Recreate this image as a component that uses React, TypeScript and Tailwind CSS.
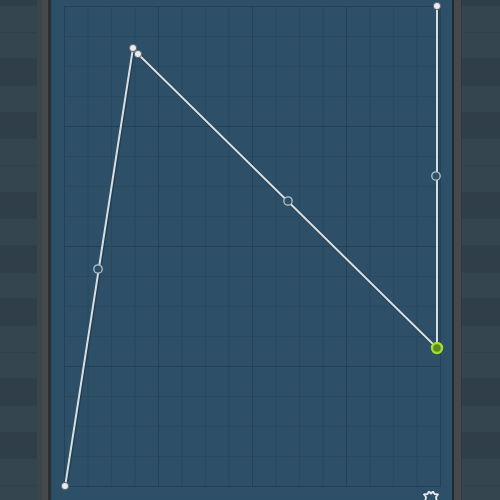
import React from "react";

// piano-style key rows, F at top of the first full row
const KEY_PATTERN = [false, false, true, false, true, false, false, true, false, true, false, true];

function KeyColumn({ className }: { className?: string }) {
  const rows = Array.from({ length: 19 }, (_, i) => KEY_PATTERN[i % 12]);
  return (
    <div className={"flex flex-col overflow-hidden " + (className ?? "")}>
      <div className="h-[5px] shrink-0 bg-[#2f3e48]" />
      {rows.map((dark, i) => (
        <div
          key={i}
          className={
            "h-[26.67px] shrink-0 border-t border-[#30404a] " +
            (dark ? "bg-[#2f3e48]" : "bg-[#35454f]")
          }
        />
      ))}
    </div>
  );
}

function Grid() {
  const w = 376;
  const h = 481;
  const vx = Array.from({ length: 17 }, (_, i) => i * 23.5);
  const hy = Array.from({ length: 17 }, (_, i) => i * 30);
  return (
    <svg width={w} height={h} viewBox={`0 0 ${w} ${h}`} className="overflow-visible block">
      {vx.map((x, i) => (
        <line
          key={"v" + i}
          x1={x + 0.5}
          y1={0}
          x2={x + 0.5}
          y2={h}
          stroke={i % 4 === 0 ? "#24425560" : "#29495e"}
          strokeWidth={1}
        />
      ))}
      {hy.map((y, i) => (
        <line
          key={"h" + i}
          x1={0}
          y1={y + 0.5}
          x2={w}
          y2={y + 0.5}
          stroke={i % 4 === 0 ? "#244255" : "#29495e"}
          strokeWidth={1}
        />
      ))}
      {vx.filter((_, i) => i % 4 === 0).map((x, i) => (
        <line key={"m" + i} x1={x + 0.5} y1={0} x2={x + 0.5} y2={h} stroke="#244255" strokeWidth={1} />
      ))}

      {/* envelope */}
      <g fill="none" strokeLinecap="round" strokeLinejoin="round">
        <polyline
          points="1,481 69,42 74,48 373,342 373,0"
          stroke="#1c2f3b"
          strokeOpacity={0.55}
          strokeWidth={3.5}
          transform="translate(0.6,0.8)"
        />
        <polyline points="1,481 69,42 74,48 373,342 373,0" stroke="#d9dee2" strokeWidth={2} />
      </g>

      {/* tension handles */}
      {[
        [34, 263],
        [224, 195],
        [372, 170],
      ].map(([x, y], i) => (
        <circle key={"c" + i} cx={x} cy={y} r={4.2} fill="#2d5068" stroke="#b9c1c7" strokeWidth={1.3} />
      ))}

      {/* points */}
      {[
        [1, 480],
        [69, 42],
        [74, 48],
        [373, 0],
      ].map(([x, y], i) => (
        <circle key={"p" + i} cx={x} cy={y} r={3.6} fill="#e9ebec" stroke="#5b6770" strokeWidth={1} />
      ))}
      <circle cx={373} cy={342} r={5} fill="#5c8a22" stroke="#a6dc2c" strokeWidth={2.4} />
    </svg>
  );
}

export default function App() {
  return (
    <div className="w-[500px] h-[500px] overflow-hidden flex bg-[#2d5068] font-['Liberation_Sans',sans-serif]">
      {/* left keys */}
      <div className="flex w-[51px] shrink-0">
        <KeyColumn className="w-[37px]" />
        <div className="w-[5px] bg-[#3b454b]" />
        <div className="w-[6px] bg-[#45494c]" />
        <div className="w-[3px] bg-[#2b3035]" />
      </div>

      {/* envelope panel */}
      <div className="relative w-[401px] shrink-0 bg-[#2d5068] border-l border-[#284a60] pl-[12px] pt-[6px]">
        <Grid />
        <svg
          width="16"
          height="12"
          viewBox="0 0 16 12"
          className="absolute left-[371px] top-[491px]"
        >
          <path
            d="M2 12 L3 6 L1 3.5 L4.5 3 L6 0.5 L8 2.5 L10 0.5 L11.5 3 L15 3.5 L13 6 L14 12"
            fill="none"
            stroke="#e6eaec"
            strokeWidth={1.8}
            strokeLinejoin="round"
          />
        </svg>
      </div>

      {/* right divider + keys */}
      <div className="flex flex-1">
        <div className="w-[2px] bg-[#1e2a33]" />
        <div className="w-[7px] bg-[#45494c]" />
        <div className="w-[1px] bg-[#33393e]" />
        <KeyColumn className="flex-1" />
      </div>
    </div>
  );
}
